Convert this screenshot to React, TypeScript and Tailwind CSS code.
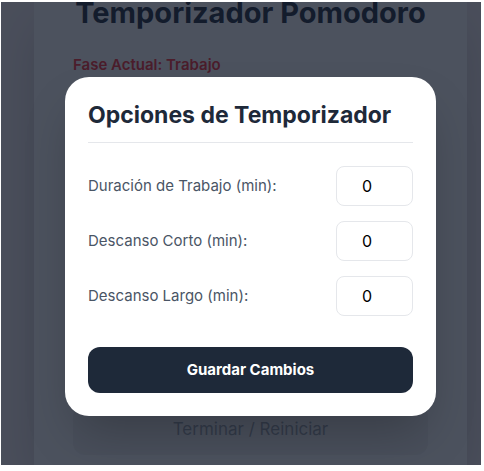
import { useState } from 'react';

const fields = [
  { id: 'work', label: 'Duración de Trabajo (min):' },
  { id: 'short', label: 'Descanso Corto (min):' },
  { id: 'long', label: 'Descanso Largo (min):' },
];

function OptionRow({ id, label }: { id: string; label: string }) {
  const [value, setValue] = useState('0');
  return (
    <div className="flex items-center justify-between">
      <label htmlFor={id} className="text-[15px] leading-6 text-gray-600">
        {label}
      </label>
      <input
        id={id}
        type="number"
        min="0"
        value={value}
        onChange={(e) => setValue(e.target.value)}
        className="h-10 w-[77px] rounded-lg border border-gray-200 px-3 text-center text-base text-black"
      />
    </div>
  );
}

function OptionsDialog() {
  return (
    <div
      role="dialog"
      aria-labelledby="options-title"
      className="w-full rounded-3xl bg-white p-[23px] shadow-2xl"
    >
      <h2
        id="options-title"
        className="mb-[23px] border-b border-gray-200 pb-3 text-[23px] leading-[30px] font-bold text-gray-800"
      >
        Opciones de Temporizador
      </h2>
      <div className="flex flex-col gap-[15px]">
        {fields.map((f) => (
          <OptionRow key={f.id} id={f.id} label={f.label} />
        ))}
      </div>
      <button
        type="button"
        className="mt-[31px] h-[46px] w-full rounded-xl bg-gray-800 text-[15px] font-bold text-white"
      >
        Guardar Cambios
      </button>
    </div>
  );
}

export default function App() {
  return (
    <div className="bg-white pt-[2px] pr-[3px] pb-[6px] pl-px font-['Inter',sans-serif]">
      <div className="relative overflow-hidden bg-[#f6eff1] pr-[14px] pl-[33px]">
        <main className="bg-white px-[39px] pb-[10px] shadow-2xl">
          <h1 className="-mt-2 text-center text-[29px] leading-[38px] font-bold text-gray-800">
            Temporizador Pomodoro
          </h1>
          <p className="mt-[21px] text-[15px] leading-6 font-semibold text-red-500">
            Fase Actual: Trabajo
          </p>
          <button
            type="button"
            disabled
            className="mt-[328px] h-[50px] w-full rounded-xl bg-gray-200 text-[17px] text-gray-700 opacity-50"
          >
            Terminar / Reiniciar
          </button>
        </main>
        <div className="absolute inset-0 flex items-center bg-gray-900/75 pt-[26px] pr-[45px] pl-16">
          <OptionsDialog />
        </div>
      </div>
    </div>
  );
}
